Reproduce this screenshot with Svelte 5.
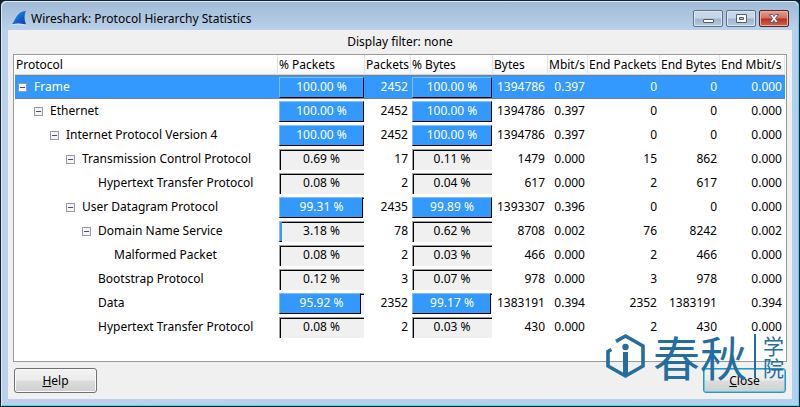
<script>
  const raw = [
    [0, 1, 'Frame', '100.00', '2452', '100.00', '1394786', '0.397', '0', '0', '0.000'],
    [1, 1, 'Ethernet', '100.00', '2452', '100.00', '1394786', '0.397', '0', '0', '0.000'],
    [2, 1, 'Internet Protocol Version 4', '100.00', '2452', '100.00', '1394786', '0.397', '0', '0', '0.000'],
    [3, 1, 'Transmission Control Protocol', '0.69', '17', '0.11', '1479', '0.000', '15', '862', '0.000'],
    [4, 0, 'Hypertext Transfer Protocol', '0.08', '2', '0.04', '617', '0.000', '2', '617', '0.000'],
    [3, 1, 'User Datagram Protocol', '99.31', '2435', '99.89', '1393307', '0.396', '0', '0', '0.000'],
    [4, 1, 'Domain Name Service', '3.18', '78', '0.62', '8708', '0.002', '76', '8242', '0.002'],
    [5, 0, 'Malformed Packet', '0.08', '2', '0.03', '466', '0.000', '2', '466', '0.000'],
    [4, 0, 'Bootstrap Protocol', '0.12', '3', '0.07', '978', '0.000', '3', '978', '0.000'],
    [4, 0, 'Data', '95.92', '2352', '99.17', '1383191', '0.394', '2352', '1383191', '0.394'],
    [4, 0, 'Hypertext Transfer Protocol', '0.08', '2', '0.03', '430', '0.000', '2', '430', '0.000']
  ];
  const rows = raw.map(([level, branch, name, ...cells], id) => ({ id, level, branch, name, cells }));
  const headers = ['Protocol', '% Packets', 'Packets', '% Bytes', 'Bytes', 'Mbit/s', 'End Packets', 'End Bytes', 'End Mbit/s'];
  const columns = ['name', 'pct', 'count', 'pctb', 'bytes', 'rate', 'endp', 'endb', 'endr'];

  let selected = $state(0);
  let closed = $state({});

  const visible = $derived.by(() => {
    const out = [];
    let hideBelow = Infinity;
    for (const row of rows) {
      if (row.level > hideBelow) continue;
      hideBelow = closed[row.id] ? row.level : Infinity;
      out.push(row);
    }
    return out;
  });
</script>

{#snippet bar(value)}
  <div class="bar">
    {#if value >= 1}
      <span class="fill" class:sliver={value < 5} style="width: {value}%"></span>
    {/if}
    <span class="value" class:light={value > 50}>{value} %</span>
  </div>
{/snippet}

<main class="window">
  <header class="titlebar">
    <svg class="fin" width="16" height="16" viewBox="0 0 16 16" aria-hidden="true">
      <defs>
        <linearGradient id="fin" x1="0" y1="0" x2="1" y2="1">
          <stop offset="0" stop-color="#4a9af0" />
          <stop offset="0.5" stop-color="#1767cf" />
          <stop offset="1" stop-color="#0a3f9c" />
        </linearGradient>
      </defs>
      <path d="M1 14.2C4.6 11.2 4.4 2.4 14.8 0.8C13.2 4.8 13 9.4 15 14.6Q7.5 12.8 1 14.2Z" fill="url(#fin)" />
      <path d="M0.5 14.8Q7.5 13.2 15.5 15.2" fill="none" stroke="#dcebfb" stroke-width="0.8" />
    </svg>
    <h1>Wireshark: Protocol Hierarchy Statistics</h1>
    <div class="controls">
      <button class="control" aria-label="Minimize">
        <svg width="28" height="15" viewBox="0 0 28 15"><rect x="9.5" y="8.5" width="10" height="3" rx="0.5" fill="#fff" stroke="#535c6c" /></svg>
      </button>
      <button class="control" aria-label="Maximize">
        <svg width="28" height="15" viewBox="0 0 28 15"><path d="M9.5 3.5h10v8h-10zM12.5 6.5v2h4v-2z" fill="#fff" fill-rule="evenodd" stroke="#535c6c" /></svg>
      </button>
      <button class="control red" aria-label="Close window">
        <svg width="28" height="15" viewBox="0 0 28 15"><path d="M9.5 3.5h3l1.5 2 1.5-2h3l-3 4 3 4h-3l-1.5-2-1.5 2h-3l3-4z" fill="#fff" stroke="#5a5064" stroke-width="0.9" /></svg>
      </button>
    </div>
  </header>

  <section class="client">
    <p class="filter">Display filter: none</p>
    <div class="list">
      <table>
        <colgroup>
          {#each columns as c}<col class={c} />{/each}
        </colgroup>
        <thead>
          <tr>{#each headers as h}<th scope="col">{h}</th>{/each}</tr>
        </thead>
        <tbody>
          {#each visible as row (row.id)}
            <tr class:selected={selected === row.id} onclick={() => (selected = row.id)}>
              <td>
                <div class="node" style="padding-left: {row.level * 16 + 3}px">
                  {#if row.branch}
                    <button
                      class="toggle"
                      aria-label="Toggle {row.name}"
                      aria-expanded={!closed[row.id]}
                      onclick={() => (closed[row.id] = !closed[row.id])}
                    >
                      <svg width="9" height="9" viewBox="0 0 9 9">
                        <rect x="0.5" y="0.5" width="8" height="8" fill="#f4f4f4" stroke="#9a9a9a" />
                        <path d={closed[row.id] ? 'M2 4.5h5M4.5 2v5' : 'M2 4.5h5'} stroke="#3a4f8c" />
                      </svg>
                    </button>
                  {:else}
                    <span class="toggle"></span>
                  {/if}
                  <span>{row.name}</span>
                </div>
              </td>
              {#each row.cells as cell, i}
                {#if i === 0 || i === 2}
                  <td class="barcell">{@render bar(cell)}</td>
                {:else}
                  <td class="num">{cell}</td>
                {/if}
              {/each}
            </tr>
          {/each}
        </tbody>
      </table>
    </div>
    <footer>
      <button class="push"><u>H</u>elp</button>
      <button class="push default"><u>C</u>lose</button>
    </footer>
  </section>

  <div class="brand">
    <svg width="40" height="46" viewBox="0 0 40 46" aria-hidden="true">
      <g fill="none" stroke="#246d9f" stroke-width="3.6">
        <path d="M10 8.4L19.5 3L37 13V33L19.5 43L2 33V18.5L5.4 16.5" />
        <path d="M19.5 19V43" stroke-width="5" />
      </g>
      <circle cx="19.5" cy="14" r="3.2" fill="#246d9f" />
    </svg>
    <span class="big">春秋</span>
    <span class="small"><span>学</span><span>院</span></span>
  </div>
</main>

<style>
  :global(body) { margin: 0; background: #10202a; }
  .window {
    position: relative;
    box-sizing: border-box;
    min-height: 100vh;
    display: flex;
    flex-direction: column;
    padding: 0 7px 7px;
    border: 1px solid #15232e;
    border-radius: 6px 6px 0 0;
    background: linear-gradient(90deg, #bcd0ec, #b4d0ea 50%, #b0d2ee);
    box-shadow: inset 0 1px #e8f2fb, inset 1px 0 #d8e8f6, inset -1px 0 #5ad0ee, inset 0 -1px #5ad0ee;
    font-family: "Noto Sans", "Noto Sans CJK SC", sans-serif;
    font-size: 12px;
    line-height: 16px;
    color: #000;
  }
  button { font: inherit; color: inherit; padding: 0; }
  .titlebar {
    display: flex;
    align-items: flex-start;
    height: 29px;
    margin: 0 -6px;
    padding: 0 9px;
    box-sizing: border-box;
    background: linear-gradient(#a0b9d5, #b9d1ea);
    box-shadow: inset 0 1px #dce9f6;
    border-radius: 5px 5px 0 0;
  }
  .fin { margin: 9px 4px 0 0; }
  h1 { flex: 1; margin: 10px 0 0; font-size: 12px; font-weight: 400; }
  .controls { display: flex; gap: 3px; margin-top: 9px; }
  .control {
    display: flex;
    border: 1px solid #5c7088;
    border-radius: 2px;
    background: linear-gradient(#c7d7e9 48%, #9db4cf 52%, #b5cae1);
    box-shadow: inset 0 0 0 1px #dbe7f3;
  }
  .red {
    border-color: #5d2023;
    background: linear-gradient(#e0a094, #cf6f60 48%, #b92f1f 52%, #d2674e);
    box-shadow: inset 0 0 0 1px #e7b1a5;
  }
  .client {
    flex: 1;
    display: flex;
    flex-direction: column;
    background: #f0f0f0;
    padding: 4px 5px 6px;
  }
  .filter { margin: 0; padding-bottom: 4px; text-align: center; }
  .list { flex: 1; padding: 0 1px; border: 1px solid #9a9a9a; background: #fff; }
  table { width: 100%; table-layout: fixed; border-collapse: collapse; }
  .pct { width: 87px; }
  .count { width: 46px; }
  .pctb { width: 82px; }
  .bytes { width: 55px; }
  .rate { width: 40px; }
  .endp { width: 72px; }
  .endb { width: 60px; }
  .endr { width: 65px; }
  th {
    height: 20px;
    padding: 0 1px;
    font-weight: 400;
    text-align: left;
    white-space: nowrap;
    background: linear-gradient(#fff 50%, #f3f4f6);
    box-shadow: inset -1px 0 #e0e3e8, inset 0 -1px #d5d5d5;
  }
  td { height: 24px; padding: 0; white-space: nowrap; }
  .selected td { color: #fff; background: #3399ff; box-shadow: inset 0 1px #6f8399, inset 0 -1px #6f8399; }
  .num { padding-right: 3px; text-align: right; }
  .node { display: flex; align-items: center; gap: 7px; }
  .toggle { display: flex; width: 9px; height: 9px; border: 0; background: none; }
  .barcell { padding: 0 1px; }
  .bar {
    position: relative;
    box-sizing: border-box;
    height: 21px;
    background: #f0f0f0;
    box-shadow: inset 1px 1px #a0a0a0, inset 2px 2px #000;
    color: #000;
  }
  .fill {
    position: absolute;
    inset: 0 auto 0 0;
    box-sizing: border-box;
    border: 1px solid;
    border-color: #7fbfff #000 #000 #7fbfff;
    background: #3399ff;
  }
  .sliver { border-right: 0; }
  .value { position: relative; display: block; text-align: center; line-height: 20px; }
  .light { color: #fff; }
  footer { display: flex; justify-content: space-between; padding: 6px 1px 0; }
  .push {
    width: 83px;
    height: 25px;
    border: 1px solid #707070;
    border-radius: 3px;
    background: linear-gradient(#f3f3f3, #ebebeb 48%, #dddddd 52%, #cfcfcf);
    box-shadow: inset 0 0 0 1px #fbfbfb;
  }
  .default { border-color: #3c8fb5; box-shadow: inset 0 0 0 1px #55cdf2; }
  .brand {
    position: absolute;
    right: 15px;
    bottom: 27px;
    display: flex;
    align-items: center;
    color: #246d9f;
    pointer-events: none;
  }
  .big { margin-left: 7px; font-family: "Noto Sans CJK SC", sans-serif; font-size: 47px; line-height: 46px; }
  .small {
    display: flex;
    flex-direction: column;
    margin-left: 7px;
    padding-left: 7px;
    border-left: 2px solid;
    font-family: "Noto Sans CJK SC", sans-serif;
    font-size: 21px;
    line-height: 22px;
  }
</style>
